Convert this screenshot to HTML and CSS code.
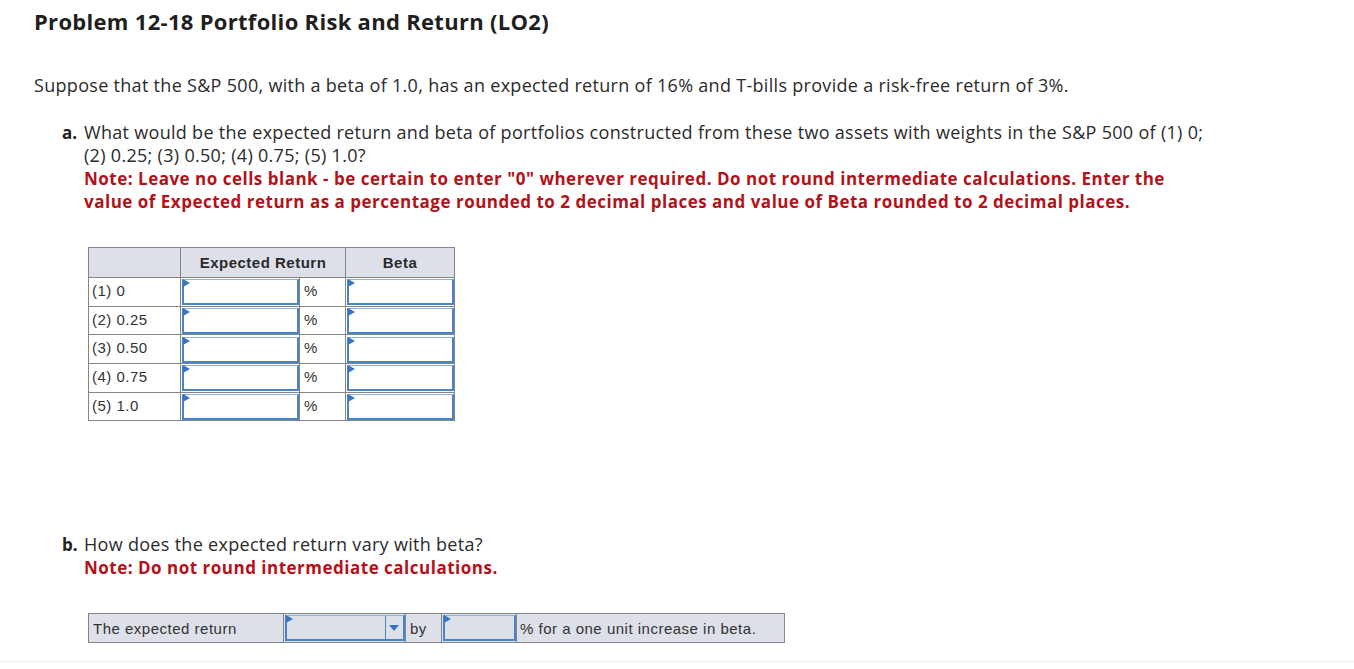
FILE: index.html
```html
<!DOCTYPE html>
<html>
<head>
<meta charset="utf-8">
<link rel="stylesheet" href="styles.css">
</head>
<body>
<div class="page">
  <h1 class="title">Problem 12-18 Portfolio Risk and Return (LO2)</h1>
  <p class="intro">Suppose that the S&amp;P 500, with a beta of 1.0, has an expected return of 16% and T-bills provide a risk-free return of 3%.</p>

  <div class="part part-a">
    <span class="part-label">a.</span>
    <div class="part-body">
      <p class="q">What would be the expected return and beta of portfolios constructed from these two assets with weights in the S&amp;P 500 of (1) 0; (2) 0.25; (3) 0.50; (4) 0.75; (5) 1.0?</p>
      <p class="note">Note: Leave no cells blank - be certain to enter "0" wherever required. Do not round intermediate calculations. Enter the value of Expected return as a percentage rounded to 2 decimal places and value of Beta rounded to 2 decimal places.</p>
    </div>
  </div>

  <table class="grid">
    <thead>
      <tr>
        <th class="c-label"></th>
        <th colspan="2">Expected Return</th>
        <th class="c-beta">Beta</th>
      </tr>
    </thead>
    <tbody>
      <tr><td class="c-label">(1) 0</td><td class="c-in"><div class="field"></div></td><td class="c-pct">%</td><td class="c-in"><div class="field"></div></td></tr>
      <tr><td class="c-label">(2) 0.25</td><td class="c-in"><div class="field"></div></td><td class="c-pct">%</td><td class="c-in"><div class="field"></div></td></tr>
      <tr><td class="c-label">(3) 0.50</td><td class="c-in"><div class="field"></div></td><td class="c-pct">%</td><td class="c-in"><div class="field"></div></td></tr>
      <tr><td class="c-label">(4) 0.75</td><td class="c-in"><div class="field"></div></td><td class="c-pct">%</td><td class="c-in"><div class="field"></div></td></tr>
      <tr><td class="c-label">(5) 1.0</td><td class="c-in"><div class="field"></div></td><td class="c-pct">%</td><td class="c-in"><div class="field"></div></td></tr>
    </tbody>
  </table>

  <div class="part part-b">
    <span class="part-label">b.</span>
    <div class="part-body">
      <p class="q">How does the expected return vary with beta?</p>
      <p class="note">Note: Do not round intermediate calculations.</p>
    </div>
  </div>

  <table class="answer">
    <tr>
      <td class="a-text1">The expected return</td>
      <td class="a-sel"><div class="select"><span class="sel-val"></span><span class="sel-btn"></span></div></td>
      <td class="a-by">by</td>
      <td class="a-in"><div class="field field-alt"></div></td>
      <td class="a-text2">% for a one unit increase in beta.</td>
    </tr>
  </table>
</div>
<div class="rule"></div>
</body>
</html>
```
FILE: styles.css
```css
* { box-sizing: border-box; }
html, body { margin: 0; padding: 0; background: #fff; }
body {
  font-family: "Open Sans", "Liberation Sans", sans-serif;
  color: #2b2b2b;
}
.page {
  padding: 9px 0 0 34px;
  height: 661px;
}
.title {
  margin: 0;
  font-size: 22px;
  line-height: 24px;
  font-weight: 700;
  letter-spacing: 0.3px;
  color: #1f1f1f;
}
.intro {
  margin: 41px 0 0 0;
  font-size: 18px;
  line-height: 23px;
  letter-spacing: 0.3px;
}
.part {
  display: flex;
  margin-left: 28px;
  font-size: 18px;
  line-height: 23px;
  letter-spacing: 0.3px;
}
.part-a { margin-top: 24px; }
.part-b { margin-top: 112px; }
.part-label {
  width: 22px;
  flex: none;
  font-size: 17px;
  font-weight: 700;
  color: #222;
  letter-spacing: 0;
}
.part-body { width: 1130px; }
.part-body p { margin: 0; }
.note {
  color: #b3121a;
  font-size: 17px;
  font-weight: 700;
  letter-spacing: 0.5px;
}

/* grid table */
.grid {
  margin: 34px 0 0 54px;
  border-collapse: collapse;
  font-family: "Liberation Sans", Arial, sans-serif;
  font-size: 15px;
  letter-spacing: 0.5px;
  color: #333;
  border: 1px solid #7f7f7f;
}
.grid th, .grid td {
  border: 1px solid #858585;
  padding: 0;
}
.grid th {
  background: #dde0e8;
  height: 30px;
  font-weight: 700;
  color: #2a2a2a;
}
.grid td { height: 28.7px; }
.grid .c-label { width: 92px; padding: 0 0 3px 3px; text-align: left; }
.grid th.c-label { padding: 0; }
.grid .c-in { width: 119px; padding: 1px 0 0 1px; }
.grid td.c-in:last-child { width: 109px; }
.grid .c-pct { width: 46px; padding: 0 0 3px 4px; }
.grid .c-beta { width: 109px; }

.field {
  position: relative;
  height: 26px;
  background: #fff;
  border: 2px solid #4a84c8;
  border-top: 1px solid #8cb3e0;
}
.field::before {
  content: "";
  position: absolute;
  left: -1px;
  top: -1px;
  border-style: solid;
  border-width: 4px 0 4px 7px;
  border-color: transparent transparent transparent #3a76c0;
}

/* answer row */
.answer {
  margin: 34px 0 0 54px;
  border-collapse: collapse;
  font-family: "Liberation Sans", Arial, sans-serif;
  font-size: 15px;
  letter-spacing: 0.5px;
  color: #333;
  background: #dde0e8;
  border: 1px solid #7f7f7f;
}
.answer td {
  border: 1px solid #858585;
  height: 29px;
  padding: 0;
}
.a-text1 { width: 195px; padding-left: 4px !important; }
.a-sel { width: 122px; padding: 1px 0 1px 1px !important; }
.a-by { width: 36px; padding-left: 4px !important; }
.a-in { width: 75px; padding: 1px 0 1px 1px !important; }
.a-text2 { width: 268px; padding-left: 3px !important; }

.select {
  position: relative;
  display: flex;
  height: 26px;
  border: 2px solid #4a84c8;
  border-top: 1px solid #8cb3e0;
  background: #dde0e8;
}
.select::before {
  content: "";
  position: absolute;
  left: -1px;
  top: -1px;
  border-style: solid;
  border-width: 4px 0 4px 7px;
  border-color: transparent transparent transparent #3a76c0;
}
.sel-val { flex: 1; border-right: 1px solid #4a84c8; }
.sel-btn {
  width: 17px;
  position: relative;
}
.sel-btn::after {
  content: "";
  position: absolute;
  left: 3px;
  top: 9px;
  border-style: solid;
  border-width: 6px 5px 0 5px;
  border-color: #3a76c0 transparent transparent transparent;
}
.field-alt { background: #dde0e8; }

.rule {
  height: 1px;
  background: #ececec;
}
```
